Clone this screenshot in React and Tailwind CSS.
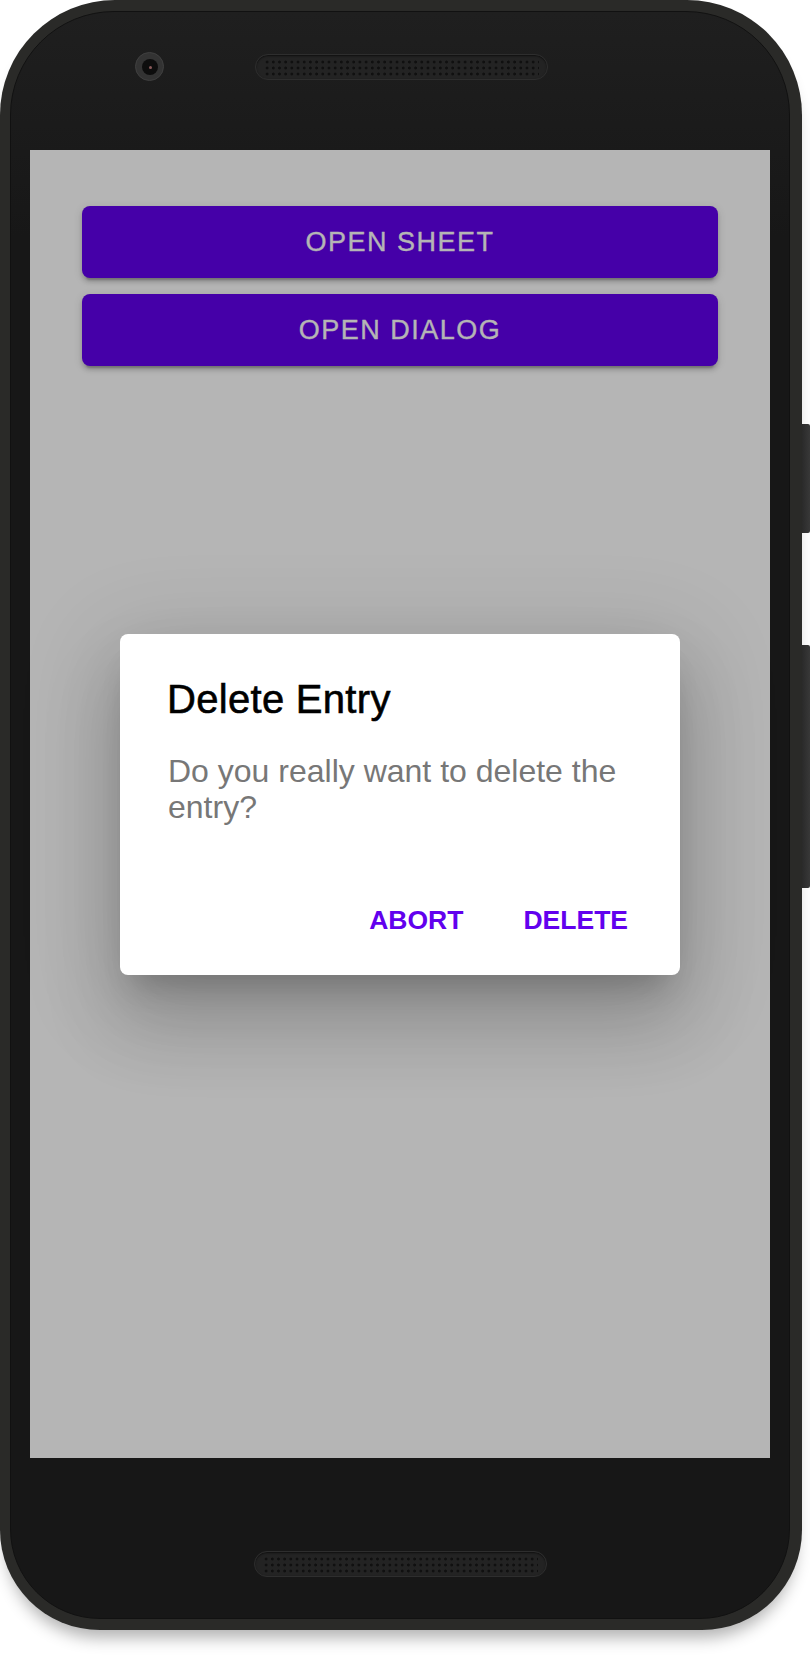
import React from 'react';

// Small grill made of a dot grid, used for the earpiece and the bottom speaker
function Speaker() {
  return (
    <div className="w-[293px] h-[26px] rounded-full bg-[#232323] border border-[#2e2e2e] shadow-[inset_0_1px_2px_rgba(0,0,0,0.6)] px-[8px] py-[3px]">
      <div className="w-full h-full bg-[radial-gradient(circle,#101010_1.2px,transparent_1.8px)] bg-[length:6.2px_6px] bg-[position:0_1px]" />
    </div>
  );
}

function Camera() {
  return (
    <div className="w-[29px] h-[29px] rounded-full bg-[#333333] border border-[#404040] flex items-center justify-center">
      <div className="w-[16px] h-[16px] rounded-full bg-[#0d0d0d] flex items-center justify-center">
        <div className="w-[3px] h-[3px] rounded-full bg-[#8a5a5a] translate-x-[1px] translate-y-[1px]" />
      </div>
    </div>
  );
}

function OpenButton({ label }) {
  return (
    <button className="h-[72px] w-full rounded-[8px] bg-[#4500a8] text-[#b5b5b5] text-[27px] tracking-[1.5px] [-webkit-text-stroke:0.4px_#b5b5b5] shadow-[0_6px_2px_-4px_rgba(0,0,0,0.2),0_4px_4px_0_rgba(0,0,0,0.14),0_2px_10px_0_rgba(0,0,0,0.12)]">
      {label}
    </button>
  );
}

export default function App() {
  return (
    <div className="w-[810px] h-[1664px] bg-white font-['Liberation_Sans',Arial,sans-serif]">
      {/* Phone body */}
      <div className="relative w-[802px] h-[1630px] rounded-t-[115px] rounded-b-[100px] bg-[#2a2a28] pl-[10px] pr-[12px] py-[11px] shadow-[0_14px_16px_-6px_rgba(0,0,0,0.3)]">
        {/* side keys */}
        <div className="absolute left-full top-[424px] w-[8px] h-[109px] rounded-r-[2px] bg-[linear-gradient(90deg,#2a2a2a,#383838)]" />
        <div className="absolute left-full top-[645px] w-[8px] h-[243px] rounded-r-[2px] bg-[linear-gradient(90deg,#2a2a2a,#383838)]" />

        {/* Face */}
        <div className="w-full h-full rounded-t-[104px] rounded-b-[90px] border border-[#111] bg-[linear-gradient(180deg,#1f1f1f_0%,#171717_14%,#171717_100%)] flex flex-col items-center">
          {/* top bezel */}
          <div className="w-full h-[138px] flex items-start pt-[40px] pl-[124px]">
            <Camera />
            <div className="ml-[91px] mt-[2px]">
              <Speaker />
            </div>
          </div>

          {/* Screen */}
          <div className="relative w-[740px] h-[1308px] bg-[#b5b5b5] flex flex-col gap-[16px] pt-[56px] px-[52px]">
            <OpenButton label="OPEN SHEET" />
            <OpenButton label="OPEN DIALOG" />

            {/* Dialog */}
            <div className="absolute inset-0 flex items-center justify-center">
              <div className="w-[560px] h-[341px] rounded-[8px] bg-white flex flex-col pt-[41px] pl-[47px] pr-[52px] pb-[39px] shadow-[0_22px_30px_-14px_rgba(0,0,0,0.2),0_48px_76px_6px_rgba(0,0,0,0.14),0_18px_92px_16px_rgba(0,0,0,0.12)]">
                <h2 className="text-[40px] leading-[48px] tracking-[0.3px] text-black [-webkit-text-stroke:0.6px_#000]">Delete Entry</h2>
                <p className="mt-[30px] ml-[1px] text-[32px] leading-[36px] text-[#777777]">
                  Do you really want to delete the entry?
                </p>
                <div className="mt-auto flex justify-end gap-[60px]">
                  <button className="text-[26.5px] leading-[32px] font-bold text-[#6200ee]">ABORT</button>
                  <button className="text-[26.5px] leading-[32px] font-bold text-[#6200ee]">DELETE</button>
                </div>
              </div>
            </div>
          </div>

          {/* bottom bezel */}
          <div className="w-full flex justify-center pt-[93px]">
            <Speaker />
          </div>
        </div>
      </div>
    </div>
  );
}
